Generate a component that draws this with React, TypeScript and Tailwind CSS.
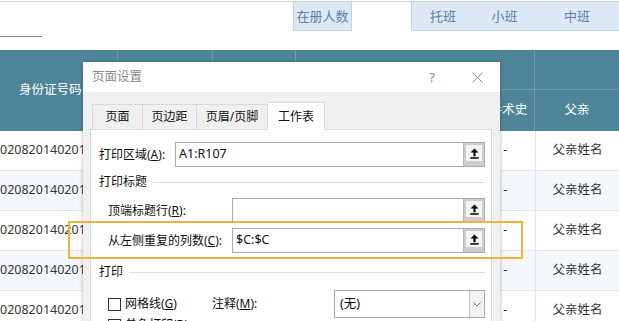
import clsx from 'clsx';

const rows = [0, 1, 2, 3, 4];

function UpArrowButton() {
  return (
    <div className="w-[21px] self-stretch bg-[#cdcdcd] border-l border-[#b5b5b5] px-[2px] pt-[2px] pb-[5px]">
      <div className="h-full bg-[#f4f4f4] flex items-center justify-center">
        <svg width="9" height="11" viewBox="0 0 9 11">
          <path d="M4.5 0.5 L8.5 4.6 H5.6 V8.2 H3.4 V4.6 H0.5 Z" fill="#000" />
          <rect x="0.3" y="9.2" width="8.4" height="1.5" fill="#000" />
        </svg>
      </div>
    </div>
  );
}

function RefInput({ value }: { value?: string }) {
  return (
    <div className="flex-1 h-full flex border border-[#ababab] bg-white">
      <div className="flex-1 flex items-center pl-[3px] text-[12.5px] text-[#111]">{value}</div>
      <UpArrowButton />
    </div>
  );
}

function GroupLabel({ label }: { label: string }) {
  return (
    <div className="h-[18px] flex items-center gap-[6px]">
      <span className="text-[12px] text-[#111]">{label}</span>
      <div className="flex-1 h-px bg-[#dcdcdc]" />
    </div>
  );
}

function Checkbox() {
  return <div className="w-[13px] h-[13px] border border-[#333] bg-white shrink-0" />;
}

export default function App() {
  return (
    <div className="relative w-[619px] h-[321px] overflow-hidden bg-white font-['Noto_Sans','Noto_Sans_CJK_SC',sans-serif] leading-none">
      {/* sheet top */}
      <div className="h-[50px] pt-px">
        <div className="border-t border-[#d2d2d2]" />
        <div className="flex h-[29px]">
          <div className="w-[303px]" />
          <div className="w-[61px] bg-[#dde8f6] border-x border-b border-[#c8d5e5] flex items-center justify-center text-[13px] text-[#65809e]">
            在册人数
          </div>
          <div className="w-[61px]" />
          <div className="flex-1 flex bg-[#dde8f6] border-l border-b border-[#c8d5e5] text-[13px] text-[#65809e]">
            <div className="w-[62px] flex items-center justify-center">托班</div>
            <div className="w-[61px] flex items-center justify-center">小班</div>
            <div className="w-[84px] flex items-center justify-center">中班</div>
          </div>
        </div>
        <div className="mt-[5px] w-[42px] h-px bg-[#8c8c8c]" />
      </div>

      {/* header band */}
      <div className="flex h-[81px] bg-[#4f8599] text-white text-[12.5px]">
        <div className="w-[120px] border-r border-[#6d9bae] flex items-center pl-[19px]">身份证号码</div>
        <div className="w-[98px] border-r border-[#6d9bae]" />
        <div className="w-[85px] border-r border-[#6d9bae]" />
        <div className="w-[245px] border-r border-[#6d9bae] flex flex-col">
          <div className="h-[40px] border-b border-[#6d9bae]" />
          <div className="flex-1 flex">
            <div className="w-[184px] border-r border-[#6d9bae]" />
            <div className="flex-1 flex items-center justify-center pl-[3px]">手术史</div>
          </div>
        </div>
        <div className="w-[84px] shrink-0 flex flex-col">
          <div className="h-[40px] border-b border-[#6d9bae]" />
          <div className="flex-1 flex items-center justify-center">父亲</div>
        </div>
      </div>

      {/* data rows */}
      {rows.map((r) => (
        <div
          key={r}
          className={clsx(
            'flex h-[40px] border-b border-[#e1e7ee] text-[12.5px] text-[#333]',
            r % 2 === 1 ? 'bg-[#f4f7fb]' : 'bg-white'
          )}
        >
          <div className="w-[120px] flex items-center">020820140201</div>
          <div className="w-[367px]" />
          <div className="w-[61px] flex items-center justify-center">-</div>
          <div className="w-[84px] shrink-0 border-l border-[#e1e7ee] flex items-center justify-center">父亲姓名</div>
        </div>
      ))}

      {/* page setup dialog */}
      <div className="absolute left-[83px] top-[62px] w-[417px] h-[280px] bg-[#f0f0f0] shadow-[0_0_4px_rgba(0,0,0,0.3)] text-[12px] text-[#111]">
        <div className="h-[30px] bg-white flex items-center pl-[9px] pr-[17px]">
          <span className="flex-1 text-[12.5px] text-[#8a8a8a]">页面设置</span>
          <span className="text-[13px] text-[#8a8a8a] mr-[37px]">?</span>
          <svg width="11" height="11" viewBox="0 0 11 11">
            <path d="M0.5 0.5 L10.5 10.5 M10.5 0.5 L0.5 10.5" stroke="#8a8a8a" strokeWidth="1" />
          </svg>
        </div>

        <div className="pl-[7px] pr-[8px]">
          {/* tabs */}
          <div className="flex items-end h-[37px] pl-[2px]">
            <div className="w-[51px] h-[25px] border border-b-0 border-[#d9d9d9] flex items-center justify-center">页面</div>
            <div className="w-[54px] h-[25px] border-t border-r border-[#d9d9d9] flex items-center justify-center">页边距</div>
            <div className="w-[71px] h-[25px] border-t border-r border-[#d9d9d9] flex items-center justify-center">页眉/页脚</div>
            <div className="w-[57px] h-[28px] bg-white border-t border-r border-[#d9d9d9] flex items-center justify-center relative top-px z-10">工作表</div>
          </div>

          {/* panel */}
          <div className="h-[240px] bg-white border border-[#d9d9d9] pt-[12px] pl-[8px] pr-[6px]">
            <div className="h-[25px] flex items-center">
              <span className="w-[76px]">
                打印区域(<span className="underline">A</span>):
              </span>
              <RefInput value="A1:R107" />
            </div>

            <div className="mt-[6px]">
              <GroupLabel label="打印标题" />
            </div>

            <div className="mt-[7px] h-[25px] flex items-center pl-[9px]">
              <span className="w-[124px]">
                顶端标题行(<span className="underline">R</span>):
              </span>
              <RefInput />
            </div>

            <div className="mt-[5px] h-[25px] flex items-center pl-[9px]">
              <span className="w-[124px]">
                从左侧重复的列数(<span className="underline">C</span>):
              </span>
              <RefInput value="$C:$C" />
            </div>

            <div className="mt-[10px]">
              <GroupLabel label="打印" />
            </div>

            <div className="mt-[9px] h-[28px] flex items-center pl-[9px]">
              <div className="w-[104px] flex items-center gap-[4px]">
                <Checkbox />
                <span>
                  网格线(<span className="underline">G</span>)
                </span>
              </div>
              <span className="w-[122px]">
                注释(<span className="underline">M</span>):
              </span>
              <div className="flex-1 h-full flex border border-[#ababab] bg-white">
                <div className="flex-1 flex items-center pl-[5px] text-[12.5px]">(无)</div>
                <div className="w-[15px] border-l border-[#c4c4c4] bg-[#f2f2f2] flex items-center justify-center">
                  <svg width="8" height="5" viewBox="0 0 8 5">
                    <path d="M0.5 0.5 L4 4 L7.5 0.5" stroke="#777" fill="none" strokeWidth="1" />
                  </svg>
                </div>
              </div>
            </div>

            <div className="mt-px flex items-start pl-[9px] gap-[4px]">
              <Checkbox />
              <span>
                单色打印(<span className="underline">B</span>)
              </span>
            </div>
          </div>
        </div>
      </div>

      {/* highlight */}
      <div className="absolute left-[68px] top-[221px] w-[455px] h-[38px] border-2 border-[#f1b235] z-20" />
    </div>
  );
}
